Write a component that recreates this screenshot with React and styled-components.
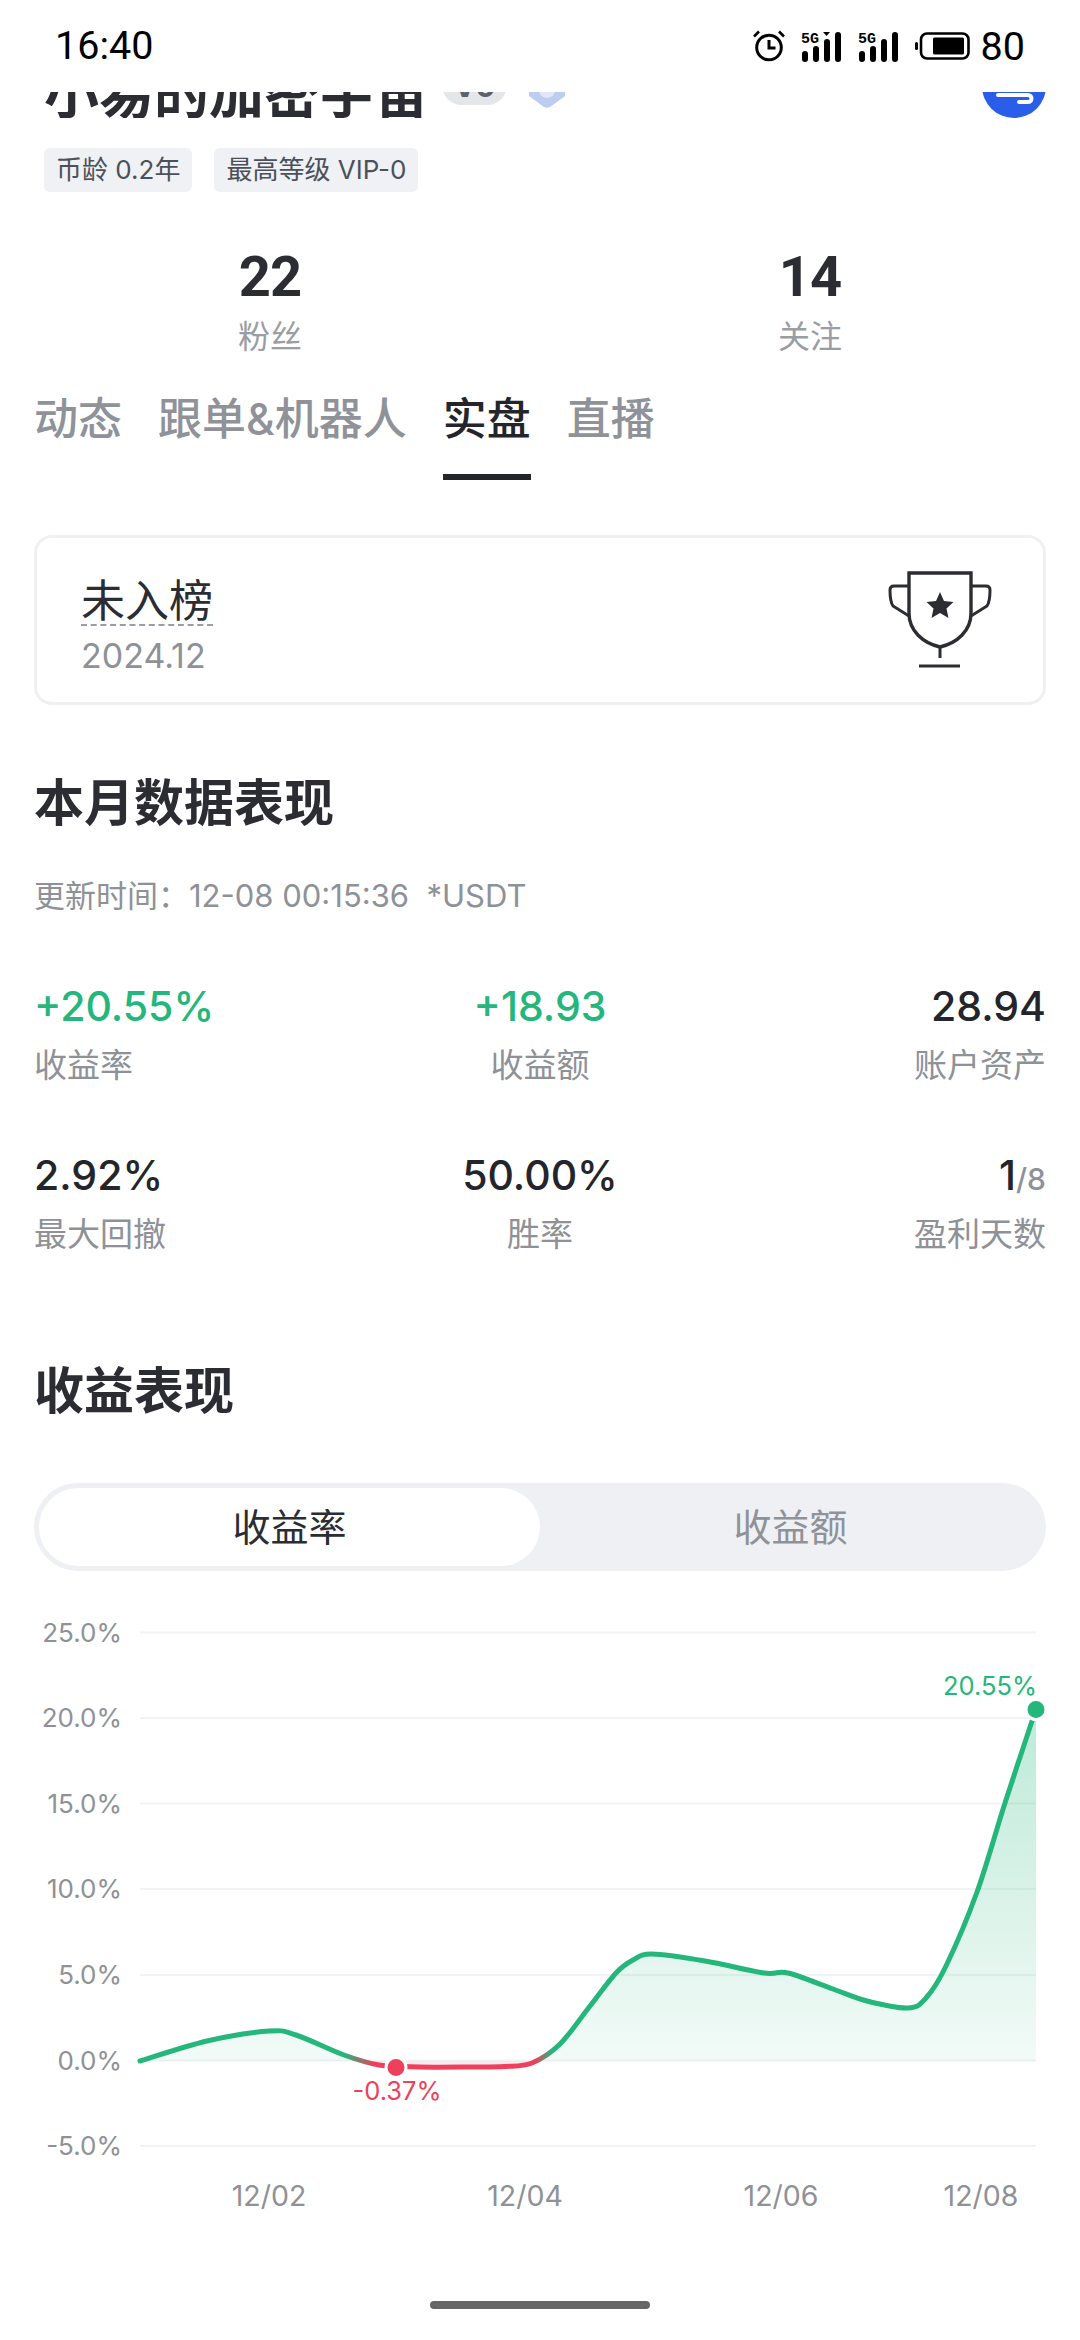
import React from "react";
import styled, { createGlobalStyle } from "styled-components";

const SANS = `Inter, "Noto Sans CJK SC", sans-serif`;

const GlobalStyle = createGlobalStyle`
  html, body {
    margin: 0;
    padding: 0;
    background: #fff;
  }
  * {
    box-sizing: border-box;
  }
`;

//chart data, in page pixels (viewBox starts at y = 1600)
const gridLines = [
  { y: 1632.5, label: "25.0%" },
  { y: 1718, label: "20.0%" },
  { y: 1803.5, label: "15.0%" },
  { y: 1889, label: "10.0%" },
  { y: 1975, label: "5.0%" },
  { y: 2060.5, label: "0.0%" },
  { y: 2146, label: "-5.0%" },
];
const dates = [
  { x: 269, label: "12/02" },
  { x: 525, label: "12/04" },
  { x: 781, label: "12/06" },
  { x: 981, label: "12/08" },
];
const points = [
  [140, 2061],
  [207, 2041],
  [269, 2031],
  [296, 2035],
  [344, 2055],
  [379, 2065],
  [420, 2067],
  [470, 2067],
  [505, 2066.5],
  [532, 2063],
  [560, 2044],
  [590, 2006],
  [616, 1973],
  [633, 1960],
  [652, 1954],
  [705, 1961],
  [764, 1973],
  [788, 1973],
  [833, 1989],
  [867, 2001],
  [908, 2008],
  [926, 1998],
  [946, 1966],
  [977, 1892],
  [1005, 1803],
  [1036, 1709],
];

// catmull-rom through the points
const smoothPath = (pts) => {
  let d = `M${pts[0][0]} ${pts[0][1]}`;
  for (let i = 0; i < pts.length - 1; i++) {
    const p0 = pts[i - 1] || pts[i];
    const p1 = pts[i];
    const p2 = pts[i + 1];
    const p3 = pts[i + 2] || p2;
    const c1x = p1[0] + (p2[0] - p0[0]) / 6;
    const c1y = p1[1] + (p2[1] - p0[1]) / 6;
    const c2x = p2[0] - (p3[0] - p1[0]) / 6;
    const c2y = p2[1] - (p3[1] - p1[1]) / 6;
    d += ` C${c1x} ${c1y} ${c2x} ${c2y} ${p2[0]} ${p2[1]}`;
  }
  return d;
};

const App = () => {
  const line = smoothPath(points);
  const area = `${line} L1036 2061 L140 2061 Z`;
  return (
    <Page>
      <GlobalStyle />
      <StatusBar>
        <Clock>16:40</Clock>
        <StatusIcons>
          <AlarmIcon />
          <SignalIcon hasArrow />
          <SignalIcon />
          <BatteryIcon />
          <Level>80</Level>
        </StatusIcons>
      </StatusBar>

      <NameRow>
        <NameLeft>
          <Name>小易的加密宇宙</Name>
          <LevelBadge>V0</LevelBadge>
          <ShieldWrap>
            <ShieldIcon />
          </ShieldWrap>
        </NameLeft>
        <LinkBadge>
          <svg width="64" height="64" viewBox="0 0 64 64">
            <path
              d="M16 41h30a3.5 3.5 0 0 1 0 7H37"
              fill="none"
              stroke="#fff"
              strokeWidth="4"
              strokeLinecap="round"
            />
          </svg>
        </LinkBadge>
      </NameRow>

      <Tags>
        <Tag>币龄 0.2年</Tag>
        <Tag>最高等级 VIP-0</Tag>
      </Tags>

      <Stats>
        <Stat>
          <StatValue>22</StatValue>
          <StatLabel>粉丝</StatLabel>
        </Stat>
        <Stat>
          <StatValue>14</StatValue>
          <StatLabel>关注</StatLabel>
        </Stat>
      </Stats>

      <Tabs>
        <Tab>动态</Tab>
        <Tab>跟单&机器人</Tab>
        <Tab $active>实盘</Tab>
        <Tab>直播</Tab>
      </Tabs>

      <RankCard>
        <RankInfo>
          <RankTitle>未入榜</RankTitle>
          <RankDate>2024.12</RankDate>
        </RankInfo>
        <TrophyIcon />
      </RankCard>

      <SectionTitle>本月数据表现</SectionTitle>
      <UpdateLine>更新时间：12-08 00:15:36&nbsp;&nbsp;*USDT</UpdateLine>

      <Metrics>
        <Metric>
          <MetricValue $green>+20.55%</MetricValue>
          <MetricLabel>收益率</MetricLabel>
        </Metric>
        <Metric $align="center">
          <MetricValue $green>+18.93</MetricValue>
          <MetricLabel>收益额</MetricLabel>
        </Metric>
        <Metric $align="right">
          <MetricValue>28.94</MetricValue>
          <MetricLabel>账户资产</MetricLabel>
        </Metric>
        <Metric>
          <MetricValue>2.92%</MetricValue>
          <MetricLabel>最大回撤</MetricLabel>
        </Metric>
        <Metric $align="center">
          <MetricValue>50.00%</MetricValue>
          <MetricLabel>胜率</MetricLabel>
        </Metric>
        <Metric $align="right">
          <MetricValue>
            1<MetricTotal>/8</MetricTotal>
          </MetricValue>
          <MetricLabel>盈利天数</MetricLabel>
        </Metric>
      </Metrics>

      <ChartTitle>收益表现</ChartTitle>

      <Segments>
        <Segment $active>收益率</Segment>
        <Segment>收益额</Segment>
      </Segments>

      <Chart viewBox="0 1600 1080 640" width="1080" height="640">
        <defs>
          <linearGradient id="lineColor" gradientUnits="userSpaceOnUse" x1="140" y1="0" x2="1036" y2="0">
            <stop offset="0.228" stopColor="#25b67c" />
            <stop offset="0.262" stopColor="#ee3f5d" />
            <stop offset="0.44" stopColor="#ee3f5d" />
            <stop offset="0.46" stopColor="#25b67c" />
          </linearGradient>
          <linearGradient id="areaColor" gradientUnits="userSpaceOnUse" x1="0" y1="1709" x2="0" y2="2061">
            <stop offset="0" stopColor="#25b67c" stopOpacity="0.3" />
            <stop offset="1" stopColor="#25b67c" stopOpacity="0.06" />
          </linearGradient>
          <clipPath id="aboveZero">
            <rect x="0" y="1600" width="1080" height="461" />
          </clipPath>
          <clipPath id="belowZero">
            <rect x="0" y="2061" width="1080" height="40" />
          </clipPath>
        </defs>

        {gridLines.map((g) => (
          <g key={g.label}>
            <line x1="140" x2="1036" y1={g.y} y2={g.y} stroke="#f1f3f6" strokeWidth="2" />
            <AxisText x="122" y={g.y + 9} textAnchor="end">
              {g.label}
            </AxisText>
          </g>
        ))}
        {dates.map((d) => (
          <DateText key={d.label} x={d.x} y="2206" textAnchor="middle">
            {d.label}
          </DateText>
        ))}

        <path d={area} fill="url(#areaColor)" clipPath="url(#aboveZero)" />
        <path d={area} fill="#ee3f5d" fillOpacity="0.1" clipPath="url(#belowZero)" />
        <path d={line} fill="none" stroke="url(#lineColor)" strokeWidth="5" strokeLinecap="round" />

        <circle cx="396" cy="2067.5" r="10" fill="#ee3f5d" stroke="#fff" strokeWidth="3" />
        <circle cx="1036" cy="1709.5" r="10" fill="#25b67c" stroke="#fff" strokeWidth="3" />
        <ValueText x="397" y="2100" textAnchor="middle" fill="#ee3f5d">
          -0.37%
        </ValueText>
        <ValueText x="1037" y="1695" textAnchor="end" fill="#25b67c">
          20.55%
        </ValueText>
      </Chart>

      <HomeBar />
    </Page>
  );
};

const AlarmIcon = () => (
  <svg width="32" height="32" viewBox="0 0 32 32">
    <circle cx="16" cy="17.5" r="12.3" fill="none" stroke="#000" strokeWidth="3" />
    <path d="M16 10v8h6.5" fill="none" stroke="#000" strokeWidth="3" />
    <path d="M1 6.5 6 1.5M31 6.5l-5-5" stroke="#000" strokeWidth="2.6" />
  </svg>
);

const SignalIcon = ({ hasArrow }) => (
  <svg width="41" height="31" viewBox="0 0 41 31">
    <SmallText x="0" y="12">
      5G
    </SmallText>
    <rect x="1" y="20" width="6" height="11" rx="3" />
    <rect x="12" y="15" width="6" height="16" rx="3" />
    <rect x="23" y="8" width="6" height="23" rx="3" />
    <rect x="34" y="1" width="6" height="30" rx="3" />
    {hasArrow && <path d="M22 1h7l-3.5 4z" />}
  </svg>
);

const BatteryIcon = () => (
  <svg width="55" height="28" viewBox="0 0 55 28">
    <rect x="6" y="1.5" width="47.5" height="25" rx="6" fill="none" stroke="#000" strokeWidth="2.6" />
    <rect x="18" y="5.5" width="31" height="17" rx="1.5" />
    <rect x="0" y="10" width="3" height="8" rx="1.5" />
  </svg>
);

const ShieldIcon = () => (
  <svg width="38" height="48" viewBox="0 0 38 48">
    <path d="M19 0 37 9v27L22 47q-3 1.500-6 0L1 36V9z" fill="#bccdf0" />
    <circle cx="19" cy="30" r="8" fill="#dfe7f8" />
  </svg>
);

const TrophyIcon = () => (
  <svg width="104" height="98" viewBox="0 0 104 98">
    <path
      d="M21 2h62v40c0 18-14 30-31 34C35 72 21 60 21 42z"
      fill="none"
      stroke="#2b2d33"
      strokeWidth="3.4"
    />
    <path
      d="M21 15H6c-3 0-4 2-4 4 0 8 1 13 3 16l16 10M83 15h15c3 0 4 2 4 4 0 8-1 13-3 16L83 45"
      fill="none"
      stroke="#2b2d33"
      strokeWidth="3"
    />
    <path d="M52 76v11M31 95h41" stroke="#2b2d33" strokeWidth="3" />
    <path d="m52 21 4 9 9.5 1-7 6.5 2 9.500-8.500-5-8.500 5 2-9.500-7-6.500 9.500-1z" fill="#2b2d33" />
  </svg>
);

const Page = styled.div`
  width: 1080px;
  height: 2340px;
  overflow: hidden;
  background: #fff;
  font-family: ${SANS};
`;

const StatusBar = styled.div`
  height: 92px;
  padding: 0 55px;
  display: flex;
  align-items: center;
  justify-content: space-between;
  font-family: Roboto, sans-serif;
  font-size: 39.5px;
  color: #000;
`;

const Clock = styled.span`
  margin-top: -1px;
`;

const StatusIcons = styled.div`
  display: flex;
  align-items: center;
  gap: 16px;
  svg {
    display: block;
  }
`;

const Level = styled.span`
  margin-left: -5px;
`;

const SmallText = styled.text`
  font-family: "Liberation Mono", monospace;
  font-size: 15px;
  font-weight: 700;
`;

const NameRow = styled.div`
  height: 26px;
  padding: 0 34px 0 44px;
  display: flex;
  justify-content: space-between;
  align-items: flex-end;
  overflow: hidden;
`;

const NameLeft = styled.div`
  display: flex;
  align-items: flex-end;
  gap: 21px;
`;

const Name = styled.div`
  font-size: 55px;
  line-height: 56px;
  font-weight: 700;
  color: #2b2d33;
  margin: 0 -8px -3px 0;
  white-space: nowrap;
`;

const LevelBadge = styled.div`
  width: 65px;
  height: 44px;
  margin-bottom: 13px;
  border-radius: 20px;
  background: #e4e6e9;
  color: #5c6068;
  font-size: 30px;
  font-weight: 700;
  text-align: center;
  line-height: 50px;
`;

const ShieldWrap = styled.div`
  margin-bottom: 10px;
  line-height: 0;
`;

const LinkBadge = styled.div`
  width: 64px;
  height: 64px;
  border-radius: 50%;
  background: #2a5ee8;
`;

const Tags = styled.div`
  display: flex;
  gap: 22px;
  padding: 30px 0 0 44px;
`;

const Tag = styled.div`
  height: 44px;
  padding: 0 12px;
  border-radius: 6px;
  background: #eff1f4;
  color: #4c505a;
  font-size: 26px;
  line-height: 44px;
`;

const Stats = styled.div`
  display: grid;
  grid-template-columns: 540px 540px;
  padding-top: 55px;
`;

const Stat = styled.div`
  text-align: center;
`;

const StatValue = styled.div`
  font-family: Roboto, sans-serif;
  font-size: 56px;
  line-height: 60px;
  font-weight: 700;
  color: #2b2d33;
  letter-spacing: -1px;
`;

const StatLabel = styled.div`
  font-size: 32px;
  line-height: 40px;
  margin-top: 10px;
  color: #9a9da3;
`;

const Tabs = styled.div`
  display: flex;
  gap: 36px;
  padding: 34px 0 0 34px;
`;

const Tab = styled.div`
  height: 89px;
  font-size: 44px;
  line-height: 56px;
  font-weight: 500;
  color: ${(p) => (p.$active ? "#23252b" : "#8f9299")};
  white-space: nowrap;
  border-bottom: 6px solid ${(p) => (p.$active ? "#23252b" : "transparent")};
`;

const RankCard = styled.div`
  margin: 55px 34px 0;
  height: 170px;
  border: 3px solid #eff0f2;
  border-radius: 18px;
  padding: 0 51px 0 44px;
  display: flex;
  align-items: center;
  justify-content: space-between;
`;

const RankInfo = styled.div`
  margin-top: 14px;
`;

const RankTitle = styled.div`
  display: table;
  font-size: 44px;
  line-height: 46px;
  color: #2b2d33;
  border-bottom: 2px dashed #9a9da3;
`;

const RankDate = styled.div`
  font-size: 34px;
  line-height: 40px;
  margin-top: 10px;
  color: #8e9197;
`;

const SectionTitle = styled.div`
  margin: 70px 34px 0;
  font-size: 50px;
  line-height: 56px;
  font-weight: 700;
  color: #2b2d33;
`;

const UpdateLine = styled.div`
  margin: 45px 34px 0;
  font-size: 31px;
  line-height: 40px;
  color: #8e9197;
`;

const Metrics = styled.div`
  display: grid;
  grid-template-columns: 1fr 1fr 1fr;
  row-gap: 63px;
  margin: 65px 34px 0;
`;

const Metric = styled.div`
  text-align: ${(p) => p.$align || "left"};
`;

const MetricValue = styled.div`
  height: 50px;
  font-size: 41px;
  line-height: 50px;
  font-weight: 500;
  color: ${(p) => (p.$green ? "#25b67c" : "#23252b")};
`;

const MetricTotal = styled.span`
  font-size: 30px;
  line-height: 1;
  color: #8e9197;
`;

const MetricLabel = styled.div`
  font-size: 33px;
  line-height: 44px;
  margin-top: 12px;
  color: #8e9197;
`;

const ChartTitle = styled(SectionTitle)`
  margin-top: 107px;
`;

const Segments = styled.div`
  margin: 64px 34px 0;
  height: 88px;
  padding: 5px;
  border-radius: 44px;
  background: #eef0f3;
  display: grid;
  grid-template-columns: 1fr 1fr;
`;

const Segment = styled.div`
  border-radius: 39px;
  background: ${(p) => (p.$active ? "#fff" : "transparent")};
  color: ${(p) => (p.$active ? "#2b2d33" : "#8f9299")};
  font-size: 38px;
  line-height: 78px;
  text-align: center;
`;

const Chart = styled.svg`
  display: block;
  margin-top: 29px;
`;

const AxisText = styled.text`
  font-family: Inter, sans-serif;
  font-size: 26px;
  fill: #8e9197;
`;

const DateText = styled(AxisText)`
  font-size: 28.5px;
`;

const ValueText = styled.text`
  font-family: Inter, sans-serif;
  font-size: 25.5px;
`;

const HomeBar = styled.div`
  width: 220px;
  height: 8px;
  margin: 61px auto 0;
  border-radius: 4px;
  background: #666;
`;

export default App;
